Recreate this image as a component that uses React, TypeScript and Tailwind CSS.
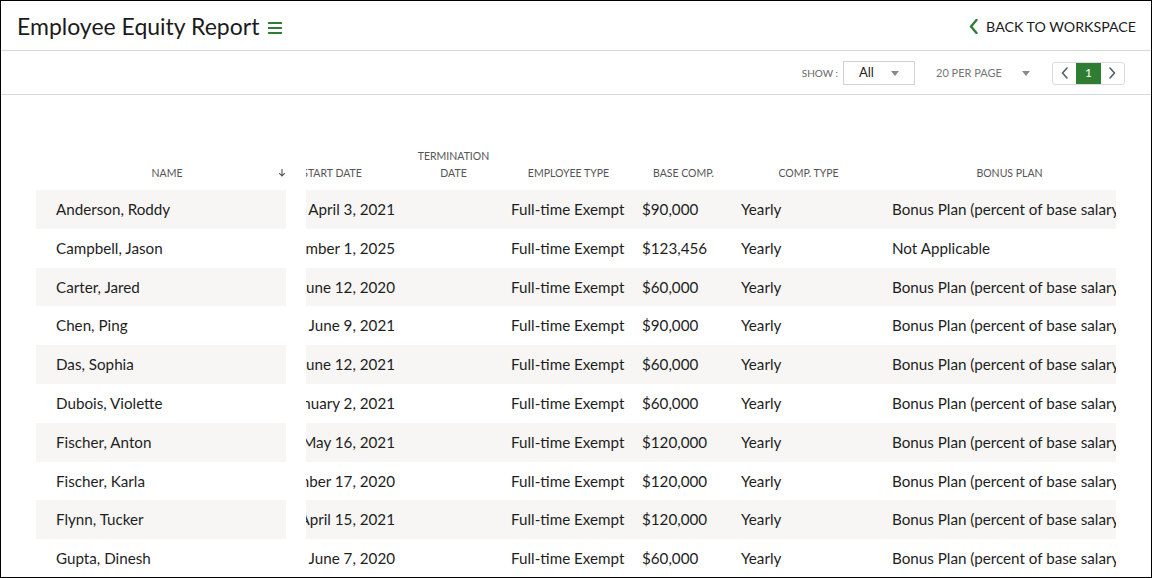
import { useLayoutEffect, useRef } from "react";

type Employee = {
  name: string;
  start: string;
  type: string;
  base: string;
  compType: string;
  bonus: string;
};

const BONUS = "Bonus Plan (percent of base salary)";

const employees: Employee[] = [
  { name: "Anderson, Roddy", start: "April 3, 2021", type: "Full-time Exempt", base: "$90,000", compType: "Yearly", bonus: BONUS },
  { name: "Campbell, Jason", start: "September 1, 2025", type: "Full-time Exempt", base: "$123,456", compType: "Yearly", bonus: "Not Applicable" },
  { name: "Carter, Jared", start: "June 12, 2020", type: "Full-time Exempt", base: "$60,000", compType: "Yearly", bonus: BONUS },
  { name: "Chen, Ping", start: "June 9, 2021", type: "Full-time Exempt", base: "$90,000", compType: "Yearly", bonus: BONUS },
  { name: "Das, Sophia", start: "June 12, 2021", type: "Full-time Exempt", base: "$60,000", compType: "Yearly", bonus: BONUS },
  { name: "Dubois, Violette", start: "January 2, 2021", type: "Full-time Exempt", base: "$60,000", compType: "Yearly", bonus: BONUS },
  { name: "Fischer, Anton", start: "May 16, 2021", type: "Full-time Exempt", base: "$120,000", compType: "Yearly", bonus: BONUS },
  { name: "Fischer, Karla", start: "November 17, 2020", type: "Full-time Exempt", base: "$120,000", compType: "Yearly", bonus: BONUS },
  { name: "Flynn, Tucker", start: "April 15, 2021", type: "Full-time Exempt", base: "$120,000", compType: "Yearly", bonus: BONUS },
  { name: "Gupta, Dinesh", start: "June 7, 2020", type: "Full-time Exempt", base: "$60,000", compType: "Yearly", bonus: BONUS },
  { name: "Hansen, Erik", start: "March 1, 2022", type: "Full-time Exempt", base: "$90,000", compType: "Yearly", bonus: BONUS },
];

function Caret() {
  return (
    <svg width="8" height="5" viewBox="0 0 8 5" className="fill-[#8a8a8a]">
      <path d="M0 0h8L4 5z" />
    </svg>
  );
}

function Chevron({ dir }: { dir: "left" | "right" }) {
  return (
    <svg width="7" height="12" viewBox="0 0 7 12" fill="none">
      <path
        d={dir === "left" ? "M6 1L1.5 6L6 11" : "M1 1L5.5 6L1 11"}
        stroke="currentColor"
        strokeWidth="1.6"
        strokeLinecap="round"
        strokeLinejoin="round"
      />
    </svg>
  );
}

const headCell = "flex items-end justify-center pb-[9px] text-center text-[10.5px] uppercase leading-[16.5px] text-[#555]";
const cell = "flex items-center whitespace-nowrap overflow-hidden";

export default function App() {
  const scroller = useRef<HTMLDivElement>(null);

  // the grid opens already scrolled a little to the right
  useLayoutEffect(() => {
    if (scroller.current) scroller.current.scrollLeft = 47;
  }, []);

  return (
    <div
      className="h-[578px] w-[1152px] overflow-hidden border border-black bg-white text-[#1e1e1e]"
      style={{ fontFamily: "Lato, 'Open Sans', sans-serif" }}
    >
      <header className="flex h-[50px] items-center justify-between border-b border-[#d3dcda] pl-[16px] pr-[15px] pt-[2px]">
        <div className="flex items-center gap-[9px]">
          <h1 className="text-[23px] leading-none text-[#1b1b1b]">Employee Equity Report</h1>
          <svg width="14" height="12" viewBox="0 0 14 12" className="mt-[2px] stroke-[#2e7d32]" strokeWidth="2">
            <path d="M0 1h14M0 6h14M0 11h14" />
          </svg>
        </div>
        <a className="flex items-center gap-[8px] text-[14.2px] text-[#1b1b1b]">
          <svg width="9" height="15" viewBox="0 0 9 15" fill="none" className="stroke-[#2e7d32]">
            <path d="M7.5 1L2 7.5L7.5 14" strokeWidth="2.4" strokeLinecap="round" strokeLinejoin="round" />
          </svg>
          BACK TO WORKSPACE
        </a>
      </header>

      <div className="flex h-[44px] items-center justify-end border-b border-[#d3dcda] pr-[26px] pt-[1px]">
        <span className="mr-[5px] text-[10px] text-[#666]">SHOW :</span>
        <div className="flex h-[24px] w-[72px] items-center justify-between border border-[#cfd3d3] pl-[15px] pr-[15px] text-[13px] text-[#222]">
          All
          <Caret />
        </div>
        <div className="ml-[21px] flex w-[94px] items-center justify-between text-[11px] text-[#777]">
          20 PER PAGE
          <Caret />
        </div>
        <div className="ml-[22px] flex h-[23px] overflow-hidden rounded-[3px] border border-[#dcdcdc]">
          <span className="flex w-[23px] items-center justify-center text-[#4f5f73]">
            <Chevron dir="left" />
          </span>
          <span className="flex w-[25px] items-center justify-center bg-[#2e7d32] text-[12px] text-white">1</span>
          <span className="flex w-[23px] items-center justify-center text-[#4f5f73]">
            <Chevron dir="right" />
          </span>
        </div>
      </div>

      <div className="mt-[50px] flex gap-[20px] pl-[35px]">
        <div className="w-[250px] shrink-0">
          <div className={`${headCell} h-[45px]`}>
            <span className="flex-1 pl-[20px]">Name</span>
            <svg width="8" height="9" viewBox="0 0 8 9" fill="none" className="mb-[4px] stroke-[#555]" strokeWidth="1.1">
              <path d="M4 1v7M1.2 5.2L4 8l2.8-2.8" />
            </svg>
          </div>
          {employees.map((e, i) => (
            <div key={e.name} className={`${cell} h-[38.8px] pl-[20px] text-[15.2px] ${i % 2 === 0 ? "bg-[#f7f6f4]" : ""}`}>
              {e.name}
            </div>
          ))}
        </div>

        <div ref={scroller} className="w-[810px] overflow-hidden">
          <div className="w-[875px]">
            <div className="flex h-[45px]">
              <div className={`${headCell} w-[146px]`}>Start Date</div>
              <div className={`${headCell} w-[97px]`}>
                Termination
                <br />
                Date
              </div>
              <div className={`${headCell} w-[133px]`}>Employee Type</div>
              <div className={`${headCell} w-[97px]`}>Base Comp.</div>
              <div className={`${headCell} w-[153px]`}>Comp. Type</div>
              <div className={`${headCell} w-[249px]`}>Bonus Plan</div>
            </div>
            {employees.map((e, i) => (
              <div key={e.name} className={`flex h-[38.8px] text-[15.2px] ${i % 2 === 0 ? "bg-[#f7f6f4]" : ""}`}>
                <div className={`${cell} w-[146px] justify-end pr-[10px]`}>{e.start}</div>
                <div className={`${cell} w-[97px]`} />
                <div className={`${cell} w-[133px] pl-[9px]`}>{e.type}</div>
                <div className={`${cell} w-[97px] pl-[7px]`}>{e.base}</div>
                <div className={`${cell} w-[153px] pl-[9px]`}>{e.compType}</div>
                <div className={`${cell} w-[249px] pl-[7px]`}>{e.bonus}</div>
              </div>
            ))}
          </div>
        </div>
      </div>
    </div>
  );
}
